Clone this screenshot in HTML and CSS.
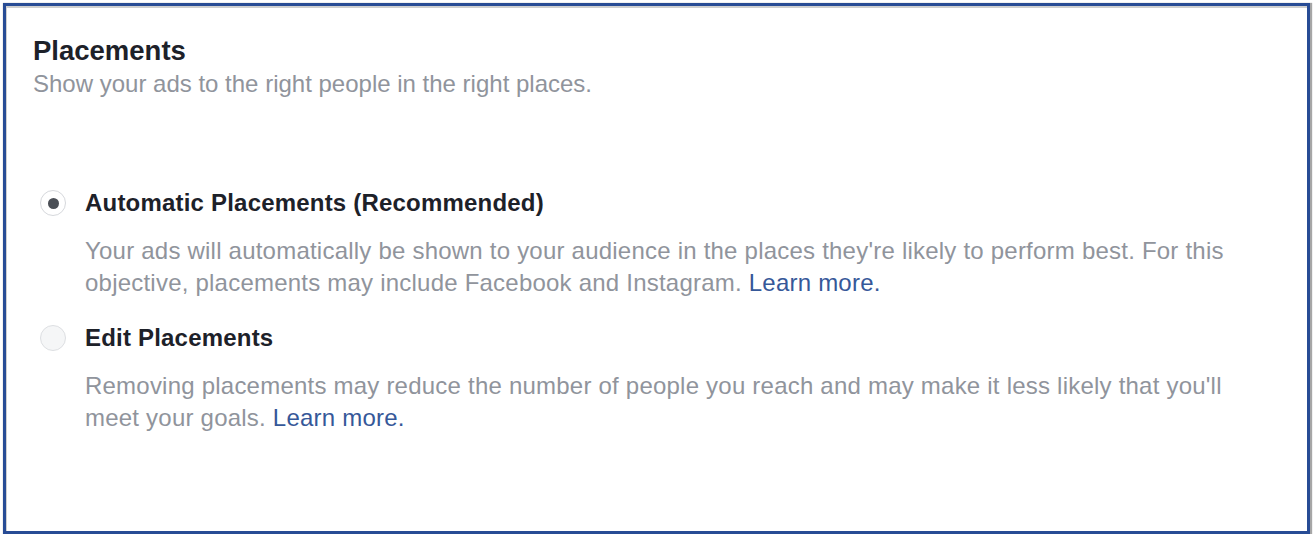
FILE: index.html
```html
<!DOCTYPE html>
<html lang="en">
<head>
<meta charset="utf-8">
<title>Placements</title>
<link rel="stylesheet" href="styles.css">
</head>
<body>
<section class="card">
  <h2 class="title">Placements</h2>
  <p class="subtitle">Show your ads to the right people in the right places.</p>
  <div class="options">
    <div class="option">
      <div class="option-head">
        <span class="radio checked"><span class="dot"></span></span>
        <span class="option-label">Automatic Placements (Recommended)</span>
      </div>
      <p class="option-desc">Your ads will automatically be shown to your audience in the places they're likely to perform best. For this objective, placements may include Facebook and Instagram. <a class="link" href="#">Learn more.</a></p>
    </div>
    <div class="option">
      <div class="option-head">
        <span class="radio"></span>
        <span class="option-label">Edit Placements</span>
      </div>
      <p class="option-desc">Removing placements may reduce the number of people you reach and may make it less likely that you'll meet your goals. <a class="link" href="#">Learn more.</a></p>
    </div>
  </div>
</section>
</body>
</html>
```
FILE: styles.css
```css
html, body {
  margin: 0;
  padding: 0;
  background: #ffffff;
}

body {
  font-family: "Liberation Sans", Arial, Helvetica, sans-serif;
  padding: 3px 0 0 3px;
}

.card {
  box-sizing: border-box;
  width: 1307px;
  height: 531px;
  border: 3px solid #284c95;
  background: #ffffff;
  padding: 29px 57px 0 27px;
  box-shadow: 1px 1px 1px 1px rgba(0, 0, 0, 0.35), inset 1px 2px 0 0 #cfcfcf;
}

.title {
  margin: 0;
  font-size: 27.5px;
  line-height: 32px;
  font-weight: bold;
  color: #1d2129;
}

.subtitle {
  margin: 1px 0 0;
  font-size: 24px;
  line-height: 32px;
  color: #90949c;
}

.options {
  margin-top: 87px;
  display: flex;
  flex-direction: column;
  gap: 23px;
}

.option-head {
  display: flex;
  align-items: center;
  gap: 19px;
  padding-left: 7px;
}

.option-label {
  font-size: 24px;
  line-height: 32px;
  font-weight: bold;
  letter-spacing: 0.2px;
  color: #1d2129;
}

.radio {
  box-sizing: border-box;
  width: 26px;
  height: 26px;
  border-radius: 50%;
  border: 1px solid #dddfe2;
  background: #f5f6f7;
  display: flex;
  align-items: center;
  justify-content: center;
  flex: none;
}

.radio.checked {
  background: #ffffff;
  border-color: #d6d8dc;
}

.dot {
  width: 11px;
  height: 11px;
  border-radius: 50%;
  background: #4b4f56;
}

.option-desc {
  margin: 16px 0 0 52px;
  font-size: 24px;
  line-height: 32px;
  letter-spacing: 0.22px;
  color: #90949c;
}

.link {
  color: #365899;
  text-decoration: none;
}
```
